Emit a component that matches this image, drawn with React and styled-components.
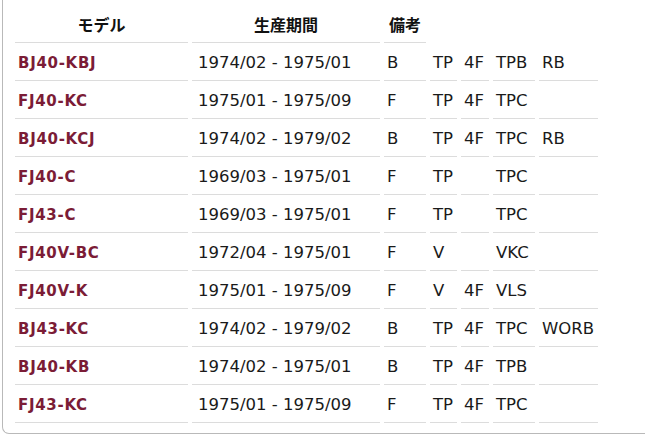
import styled, { createGlobalStyle } from "styled-components";

const GlobalStyle = createGlobalStyle`
  html, body {
    margin: 0;
    padding: 0;
    background: #fff;
  }
`;

const models = [
  ["BJ40-KBJ", "1974/02 - 1975/01", "B", "TP", "4F", "TPB", "RB"],
  ["FJ40-KC", "1975/01 - 1975/09", "F", "TP", "4F", "TPC", ""],
  ["BJ40-KCJ", "1974/02 - 1979/02", "B", "TP", "4F", "TPC", "RB"],
  ["FJ40-C", "1969/03 - 1975/01", "F", "TP", "", "TPC", ""],
  ["FJ43-C", "1969/03 - 1975/01", "F", "TP", "", "TPC", ""],
  ["FJ40V-BC", "1972/04 - 1975/01", "F", "V", "", "VKC", ""],
  ["FJ40V-K", "1975/01 - 1975/09", "F", "V", "4F", "VLS", ""],
  ["BJ43-KC", "1974/02 - 1979/02", "B", "TP", "4F", "TPC", "WORB"],
  ["BJ40-KB", "1974/02 - 1975/01", "B", "TP", "4F", "TPB", ""],
  ["FJ43-KC", "1975/01 - 1975/09", "F", "TP", "4F", "TPC", ""],
];

// 列幅
const widths = [173, 188, 42, 27, 28, 42, 59];

const App = () => {
  return (
    <>
      <GlobalStyle />
      <Panel>
        <Table>
          <colgroup>
            {widths.map((w, i) => (
              <col key={i} style={{ width: w }} />
            ))}
          </colgroup>
          <thead>
            <tr>
              <HeadCell>モデル</HeadCell>
              <HeadCell>生産期間</HeadCell>
              <HeadCell>備考</HeadCell>
              <EmptyHead colSpan={4} />
            </tr>
          </thead>
          <tbody>
            {models.map((row) => (
              <tr key={row[0]}>
                <Cell>
                  <ModelLink href="#">{row[0]}</ModelLink>
                </Cell>
                <Cell $pad={6}>{row[1]}</Cell>
                {row.slice(2).map((v, i) => (
                  <Cell key={i}>{v}</Cell>
                ))}
              </tr>
            ))}
          </tbody>
        </Table>
      </Panel>
    </>
  );
};

const Panel = styled.div`
  margin-left: 2px;
  padding: 5px 0 10px 8px;
  border: 1px solid #b9b9b9;
  border-top: none;
  border-right: none;
  border-bottom-left-radius: 7px;
  box-sizing: border-box;
`;

const Table = styled.table`
  table-layout: fixed;
  border-collapse: separate;
  border-spacing: 4px 0;
  font-family: "DejaVu Sans", "Noto Sans CJK JP", sans-serif;
  font-size: 16.5px;
  color: #1a1a1a;
`;

const HeadCell = styled.th`
  height: 38px;
  padding: 0;
  box-sizing: border-box;
  text-align: center;
  vertical-align: middle;
  font-family: "Noto Sans CJK JP", sans-serif;
  font-weight: 700;
  font-size: 16px;
  color: #111;
  border-bottom: 1px solid #dcdcdc;
`;

const EmptyHead = styled.th`
  padding: 0;
`;

const Cell = styled.td`
  height: 38px;
  padding: 1px 0 0 ${(p) => p.$pad ?? 3}px;
  box-sizing: border-box;
  vertical-align: middle;
  white-space: nowrap;
  border-bottom: 1px solid #dcdcdc;
`;

const ModelLink = styled.a`
  font-family: "DejaVu Sans", sans-serif;
  font-weight: 700;
  font-size: 15px;
  letter-spacing: 0.7px;
  color: #7b1c36;
  text-decoration: none;
`;

export default App;
